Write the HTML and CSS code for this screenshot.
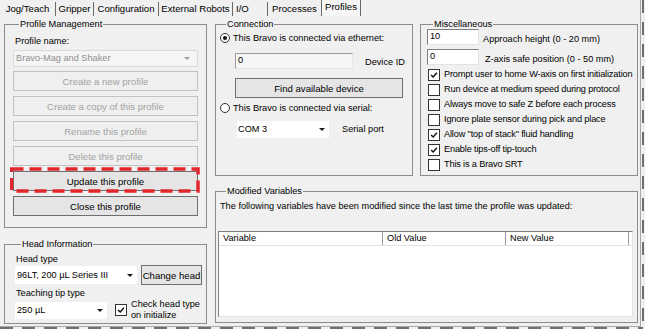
FILE: index.html
```html
<!DOCTYPE html>
<html>
<head>
<meta charset="utf-8">
<title>Profiles</title>
<link rel="stylesheet" href="styles.css">
</head>
<body>
<div class="window">
  <div class="tabs">
    <span class="tab t1">Jog/Teach</span>
    <span class="tab t2">Gripper</span>
    <span class="tab t3">Configuration</span>
    <span class="tab t4">External Robots</span>
    <span class="tab t5">I/O</span>
    <span class="tab t6">Processes</span>
    <span class="tab t7 active">Profiles</span>
  </div>

  <div class="page">
    <div class="col-left">
      <fieldset class="group profile">
        <legend>Profile Management</legend>
        <div class="label">Profile name:</div>
        <div class="combo disabled"><span>Bravo-Mag and Shaker</span><i class="arrow"></i></div>
        <div class="buttons">
          <button class="btn" disabled>Create a new profile</button>
          <button class="btn" disabled>Create a copy of this profile</button>
          <button class="btn" disabled>Rename this profile</button>
          <button class="btn" disabled>Delete this profile</button>
          <div class="highlight">
            <button class="btn">Update this profile</button>
            <svg class="dash" width="190" height="26" viewBox="0 0 190 26">
              <rect x="1.5" y="2" width="186.5" height="22" fill="none" stroke="#e3262b" stroke-width="3.5" stroke-dasharray="12 6"/>
            </svg>
          </div>
          <button class="btn">Close this profile</button>
        </div>
      </fieldset>

      <fieldset class="group head">
        <legend>Head Information</legend>
        <div class="label">Head type</div>
        <div class="head-row">
          <div class="combo head-combo"><span>96LT, 200 µL Series III</span><i class="arrow"></i></div>
          <button class="btn change">Change head</button>
        </div>
        <div class="label tip-label">Teaching tip type</div>
        <div class="tip-row">
          <div class="combo tip-combo"><span>250 µL</span><i class="arrow"></i></div>
          <span class="check on"><svg viewBox="0 0 12 12"><polyline points="2.5,6 5,8.5 9.5,3.3"/></svg></span>
          <span class="check-text">Check head type<br>on initialize</span>
        </div>
      </fieldset>
    </div>

    <div class="col-right">
      <div class="row-top">
        <fieldset class="group connection">
          <legend>Connection</legend>
          <div class="radio-row first"><span class="radio on"></span><span>This Bravo is connected via ethernet:</span></div>
          <div class="id-row">
            <div class="textbox disabled">0</div>
            <span class="id-label">Device ID</span>
          </div>
          <button class="btn find">Find available device</button>
          <div class="radio-row second"><span class="radio"></span><span>This Bravo is connected via serial:</span></div>
          <div class="port-row">
            <div class="combo port-combo"><span>COM 3</span><i class="arrow"></i></div>
            <span class="port-label">Serial port</span>
          </div>
        </fieldset>

        <fieldset class="group misc">
          <legend>Miscellaneous</legend>
          <div class="num-row first">
            <div class="textbox">10</div>
            <span class="num-label">Approach height (0 - 20 mm)</span>
          </div>
          <div class="num-row second">
            <div class="textbox">0</div>
            <span class="num-label z">Z-axis safe position (0 - 50 mm)</span>
          </div>
          <div class="checks">
            <div class="check-row"><span class="check on"><svg viewBox="0 0 12 12"><polyline points="2.5,6 5,8.5 9.5,3.3"/></svg></span>Prompt user to home W-axis on first initialization</div>
            <div class="check-row"><span class="check"></span>Run device at medium speed during protocol</div>
            <div class="check-row"><span class="check"></span>Always move to safe Z before each process</div>
            <div class="check-row"><span class="check"></span>Ignore plate sensor during pick and place</div>
            <div class="check-row"><span class="check on"><svg viewBox="0 0 12 12"><polyline points="2.5,6 5,8.5 9.5,3.3"/></svg></span>Allow "top of stack" fluid handling</div>
            <div class="check-row"><span class="check on"><svg viewBox="0 0 12 12"><polyline points="2.5,6 5,8.5 9.5,3.3"/></svg></span>Enable tips-off tip-touch</div>
            <div class="check-row"><span class="check"></span>This is a Bravo SRT</div>
          </div>
        </fieldset>
      </div>

      <fieldset class="group modified">
        <legend>Modified Variables</legend>
        <div class="note">The following variables have been modified since the last time the profile was updated:</div>
        <div class="listview">
          <div class="lv-head">
            <span class="col c1">Variable</span>
            <span class="col c2">Old Value</span>
            <span class="col c3">New Value</span>
          </div>
        </div>
      </fieldset>
    </div>
  </div>
</div>
</body>
</html>
```

FILE: styles.css
```css
* { box-sizing: border-box; }

body {
  margin: 0;
  width: 645px;
  height: 329px;
  overflow: hidden;
  font-family: "Liberation Sans", Arial, sans-serif;
  font-size: 9.2px;
  line-height: 11px;
  color: #000;
  background:
    repeating-linear-gradient(180deg, #707070 0 13px, transparent 13px 22px) 642px 0 / 2px 327px no-repeat,
    repeating-linear-gradient(90deg, #707070 0 13px, transparent 13px 22px) 0 327px / 643px 2px no-repeat,
    #f0f0f0;
}

.window {
  width: 641px;
  height: 327px;
  border-right: 1px solid #a9a9a9;
  border-bottom: 1px solid #a9a9a9;
}

/* tab strip */
.tabs { display: flex; height: 16px; padding-top: 2px; }
.tab {
  height: 14px;
  padding-top: 1px;
  border-right: 1px solid #6a6a6a;
  text-align: center;
  font-size: 9.6px;
  white-space: nowrap;
}
.t1 { width: 56px; }
.t2 { width: 38px; }
.t3 { width: 65px; }
.t4 { width: 74px; }
.t5 { width: 35px; text-align: left; padding-left: 3px; }
.t6 { width: 54px; }
.t7 { width: 39px; }
.tab.active {
  margin-top: -2px;
  height: 16px;
  padding-top: 1px;
  background: #f6f6f6;
  border-left: 1px solid #6a6a6a;
  margin-left: -1px;
  width: 40px;
}

/* layout */
.page { display: flex; gap: 8px; padding: 3px 0 0 4px; }
.col-left { width: 203px; display: flex; flex-direction: column; gap: 11px; }
.col-right { display: flex; flex-direction: column; gap: 10px; }
.row-top { display: flex; gap: 7px; }

.group {
  margin: 0;
  padding: 0;
  min-width: 0;
  border: 1px solid #8c8c8c;
}
.group legend { margin-left: 6px; padding: 0 1px; line-height: 11px; }

/* generic controls */
.btn {
  display: block;
  margin: 0;
  padding: 0;
  height: 20px;
  font: inherit;
  font-size: 9.6px;
  color: #000;
  background: #e5e5e5;
  border: 1px solid #6f6f6f;
  text-align: center;
  white-space: nowrap;
}
.btn:disabled { color: #a3a3a3; background: #efefef; border-color: #c2c2c2; }

.combo {
  display: flex;
  align-items: center;
  justify-content: space-between;
  background: #fff;
  padding: 0 4px 0 2px;
  white-space: nowrap;
}
.arrow {
  width: 0;
  height: 0;
  border-left: 3px solid transparent;
  border-right: 3px solid transparent;
  border-top: 3px solid #1a1a1a;
}
.combo.disabled {
  height: 17px;
  margin-top: 3px;
  color: #8e8e8e;
  background: #f5f5f5;
  border: 1px solid #dadada;
  padding-right: 7px;
}
.combo.disabled .arrow { border-top-color: #a0a0a0; }

.textbox {
  height: 16px;
  padding: 1px 0 0 2px;
  background: #fff;
  border: 1px solid;
  border-color: #7f7f7f #e3e3e3 #e3e3e3 #7f7f7f;
}
.textbox.disabled { background: #f5f5f5; border-color: #9d9d9d #e6e6e6 #e6e6e6 #9d9d9d; }

.check {
  width: 12px;
  height: 12px;
  flex: none;
  background: #fff;
  border: 1px solid #333;
}
.check svg { display: block; width: 10px; height: 10px; }
.check polyline { fill: none; stroke: #111; stroke-width: 1.7; }

.radio {
  width: 10px;
  height: 10px;
  flex: none;
  border: 1px solid #333;
  border-radius: 50%;
  background: #fff;
  display: flex;
  align-items: center;
  justify-content: center;
}
.radio.on::after {
  content: "";
  width: 4px;
  height: 4px;
  border-radius: 50%;
  background: #111;
}

/* profile management */
.profile { height: 209px; padding: 0 8px; }
.profile .label { margin-top: 6px; padding-left: 2px; }
.buttons { margin-top: 4px; display: flex; flex-direction: column; gap: 5px; }
.buttons .btn { width: 100%; }
.highlight { position: relative; }
.dash { position: absolute; left: -3px; top: -4px; pointer-events: none; }

/* head information */
.head { height: 85px; padding: 0 4px 0 10px; }
.head .label { margin-top: 4px; padding-left: 1px; }
.head-row { display: flex; align-items: center; gap: 4px; }
.head-combo { width: 122px; height: 18px; }
.btn.change { width: 61px; }
.head .tip-label { margin-top: 3px; }
.tip-row { display: flex; align-items: center; height: 22px; }
.tip-combo { width: 92px; height: 17px; }
.tip-row .check { margin-left: 8px; }
.check-text { margin-left: 4px; white-space: nowrap; }

/* connection */
.connection { width: 198px; height: 157px; padding: 0 4px 0 4px; }
.radio-row { display: flex; align-items: center; gap: 3px; height: 12px; }
.radio-row.first { margin-top: 2px; }
.radio-row.second { margin-top: 4px; }
.id-row { display: flex; align-items: center; margin-top: 9px; }
.id-row .textbox { width: 118px; margin-left: 15px; }
.id-label { margin-left: 12px; margin-top: 2px; }
.btn.find { width: 168px; margin: 9px 0 0 15px; }
.port-row { display: flex; align-items: center; margin-top: 7px; }
.port-combo { width: 92px; height: 17px; margin-left: 17px; padding-left: 1px; }
.port-label { margin-left: 13px; }

/* miscellaneous */
.misc { width: 218px; height: 157px; padding: 0 4px 0 6px; }
.num-row { display: flex; align-items: flex-end; }
.num-row.first { margin-top: -1px; }
.num-row.second { margin-top: 4px; }
.num-row .textbox { width: 52px; }
.num-label { margin-left: 4px; white-space: nowrap; }
.num-label.z { margin-left: 6px; }
.checks { margin-top: 2px; }
.check-row {
  display: flex;
  align-items: center;
  gap: 4px;
  height: 15px;
  padding-left: 1px;
  white-space: nowrap;
  letter-spacing: -0.16px;
}

/* modified variables */
.modified { width: 423px; height: 137px; padding: 0 4px; }
.note { margin-top: 4px; white-space: nowrap; }
.listview {
  width: 415px;
  height: 86px;
  margin: 19px 0 0 -2px;
  background: #fff;
  border: 1px solid;
  border-color: #7f7f7f #e3e3e3 #e3e3e3 #7f7f7f;
}
.lv-head { display: flex; height: 14px; border-bottom: 1px solid #e1e1e1; }
.col { padding: 1px 0 0 4px; border-right: 1px solid #9a9a9a; }
.c1 { width: 164px; }
.c2 { width: 123px; }
.c3 { width: 123px; }
```
